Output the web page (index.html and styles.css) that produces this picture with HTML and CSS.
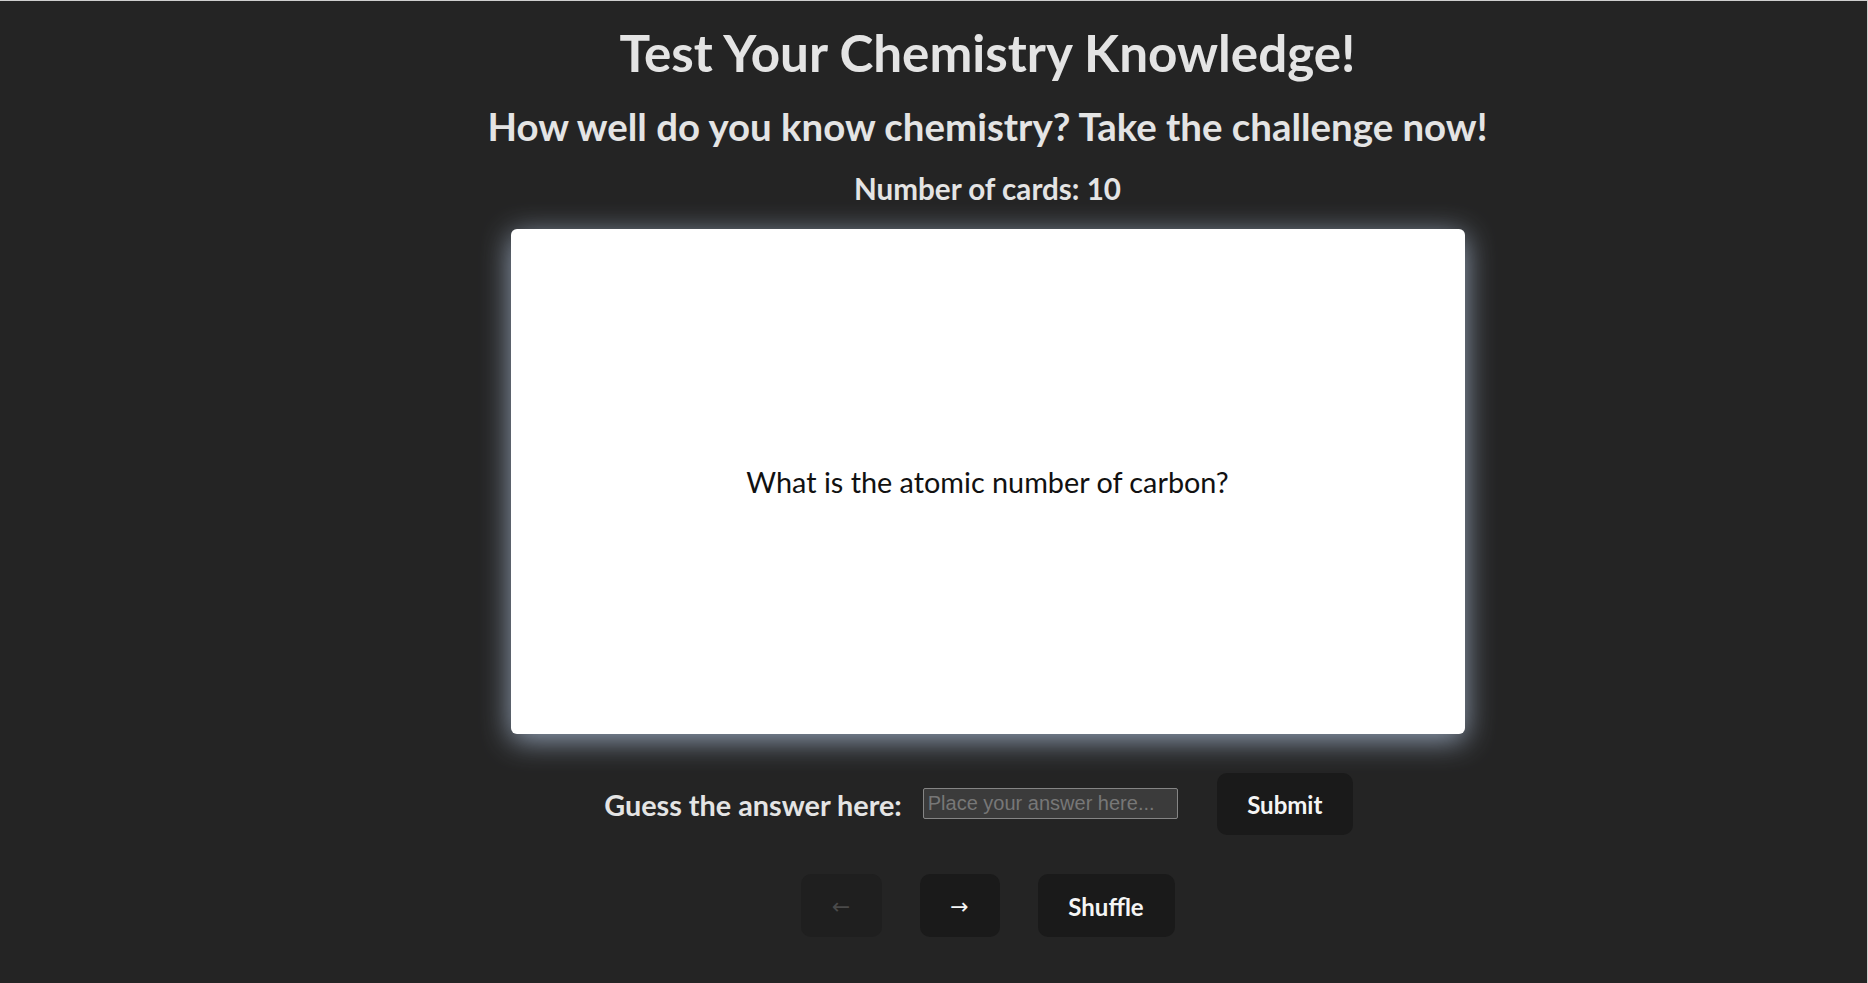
FILE: index.html
```html
<!DOCTYPE html>
<html lang="en">
<head>
<meta charset="utf-8">
<title>Chemistry Flashcards</title>
<link rel="stylesheet" href="styles.css">
</head>
<body>
<div class="frame">
  <main class="app">
    <h1 class="title">Test Your Chemistry Knowledge!</h1>
    <h2 class="subtitle">How well do you know chemistry? Take the challenge now!</h2>
    <h3 class="count">Number of cards: 10</h3>
    <div class="card">
      <p class="question">What is the atomic number of carbon?</p>
    </div>
    <form class="guess-row">
      <label class="guess-label" for="guess">Guess the answer here:</label>
      <input class="guess-input" id="guess" type="text" placeholder="Place your answer here...">
      <button class="btn submit-btn" type="button">Submit</button>
    </form>
    <div class="nav-row">
      <button class="btn arrow-btn prev-btn" type="button" disabled>&larr;</button>
      <button class="btn arrow-btn next-btn" type="button">&rarr;</button>
      <button class="btn shuffle-btn" type="button">Shuffle</button>
    </div>
  </main>
</div>
</body>
</html>
```
FILE: styles.css
```css
html, body {
  margin: 0;
  padding: 0;
  background: #242424;
}

body {
  font-family: Lato, "Open Sans", sans-serif;
  color: rgba(255, 255, 255, 0.87);
}

.frame {
  min-height: 983px;
  box-sizing: border-box;
  border-top: 1px solid #cfcfcf;
  border-right: 1px solid #cfcfcf;
}

.app {
  display: flex;
  flex-direction: column;
  align-items: center;
  padding-left: 108px;
  text-align: center;
}

.title {
  margin: 20.5px 0 0;
  font-size: 51.2px;
  line-height: 1.2;
  font-weight: 700;
  color: #e4e4e4;
}

.subtitle {
  margin: 20px 0 0;
  font-size: 38.4px;
  line-height: 1.2;
  font-weight: 700;
  color: #e4e4e4;
}

.count {
  margin: 21.5px 0 0;
  font-size: 29.6px;
  line-height: 1.2;
  font-weight: 700;
  color: #e4e4e4;
}

.card {
  margin-top: 22.5px;
  width: 954px;
  height: 505px;
  background: #ffffff;
  border-radius: 6px;
  box-shadow: 0 6px 30px rgba(148, 163, 184, 1);
  display: flex;
  align-items: center;
  justify-content: center;
}

.question {
  margin: 0;
  padding-top: 3px;
  font-size: 28.8px;
  line-height: 1.2;
  font-weight: 400;
  color: #111111;
}

.guess-row {
  margin: 39px 0 0;
  display: flex;
  align-items: center;
  padding-right: 18px;
}

.guess-label {
  margin: 4px 21px 0 0;
  font-size: 28.8px;
  line-height: 1.2;
  font-weight: 700;
  color: #e4e4e4;
}

.guess-input {
  box-sizing: border-box;
  width: 255px;
  height: 31px;
  padding: 3px 4px;
  margin: 0 39px 0 0;
  font-family: "Liberation Sans", Arial, sans-serif;
  font-size: 20px;
  color: #e4e4e4;
  background: #3b3b3b;
  border: 1px solid #858585;
  border-radius: 2px;
  outline: none;
}

.guess-input::placeholder {
  color: #777777;
}

.btn {
  box-sizing: border-box;
  height: 62px;
  padding: 2px 28.8px 0;
  font-family: Lato, "Open Sans", sans-serif;
  font-size: 24px;
  font-weight: 700;
  color: #f5f5f5;
  background: #1a1a1a;
  border: 1px solid transparent;
  border-radius: 10px;
  cursor: pointer;
}

.submit-btn {
  width: 136px;
  padding: 2px 0 0;
}

.nav-row {
  margin-top: 39px;
  display: flex;
  gap: 38px;
}

.nav-row .btn {
  height: 63px;
}

.arrow-btn {
  padding: 2px 0 0;
  font-family: "DejaVu Sans", sans-serif;
  font-weight: 400;
  font-size: 22px;
}

.prev-btn {
  width: 81px;
  background: #1f1f1f;
  color: #4a4a4a;
  cursor: default;
}

.next-btn {
  width: 80px;
}

.shuffle-btn {
  width: 137px;
  padding: 2px 0 0;
}
```
